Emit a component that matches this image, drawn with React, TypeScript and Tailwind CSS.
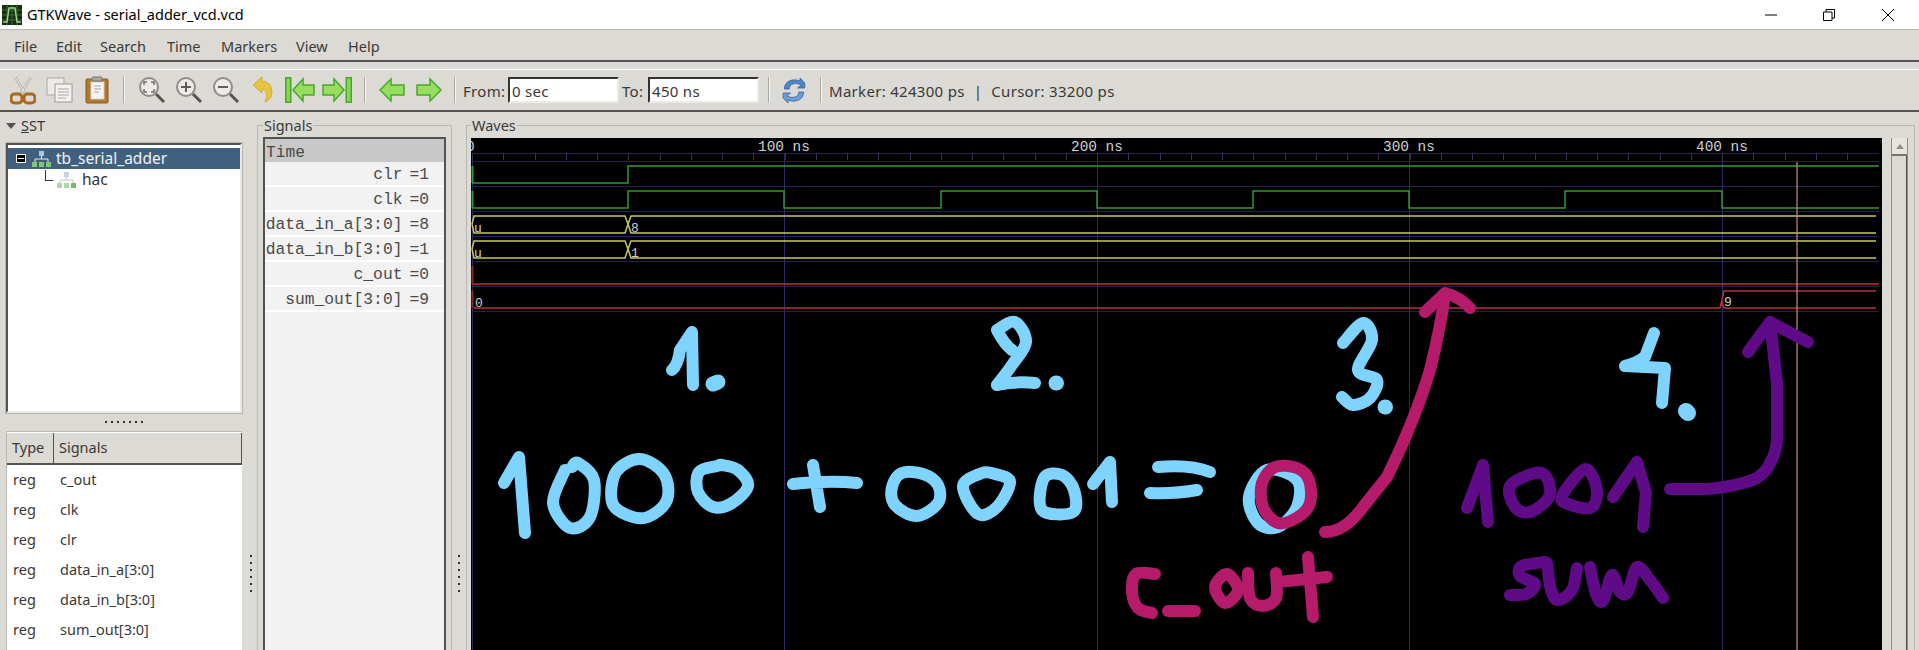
import React, { FC } from "react";

const menuItems = [
  { label: "File", className: "w-[42px]" },
  { label: "Edit", className: "w-[44px]" },
  { label: "Search", className: "w-[67px]" },
  { label: "Time", className: "w-[54px]" },
  { label: "Markers", className: "w-[75px]" },
  { label: "View", className: "w-[52px]" },
  { label: "Help", className: "w-[50px]" },
];

const signalRows = [
  { name: "clr", value: "1" },
  { name: "clk", value: "0" },
  { name: "data_in_a[3:0]", value: "8" },
  { name: "data_in_b[3:0]", value: "1" },
  { name: "c_out", value: "0" },
  { name: "sum_out[3:0]", value: "9" },
];

const typeRows = ["c_out", "clk", "clr", "data_in_a[3:0]", "data_in_b[3:0]", "sum_out[3:0]"];

const majorTicks = [784, 1097, 1409, 1722];
const minorTicks = Array.from({ length: 45 }, (_, i) => 472 + i * 31.25);
const gridRows = [161, 186, 211, 236, 261, 286, 311];

// catmull-rom through the pen points, so the scribbles stay round
const ink = (pts: number[][], closed = false) => {
  const n = pts.length;
  const at = (i: number) => (closed ? pts[(i + n) % n] : pts[Math.max(0, Math.min(n - 1, i))]);
  let d = `M${pts[0][0]} ${pts[0][1]}`;
  const segs = closed ? n : n - 1;
  for (let i = 0; i < segs; i++) {
    const [p0, p1, p2, p3] = [at(i - 1), at(i), at(i + 1), at(i + 2)];
    const c1 = [p1[0] + (p2[0] - p0[0]) / 6, p1[1] + (p2[1] - p0[1]) / 6];
    const c2 = [p2[0] - (p3[0] - p1[0]) / 6, p2[1] - (p3[1] - p1[1]) / 6];
    d += `C${c1[0]} ${c1[1]} ${c2[0]} ${c2[1]} ${p2[0]} ${p2[1]}`;
  }
  return closed ? d + "Z" : d;
};

const blueRound = [
  [[640, 459], [664, 474], [667, 500], [648, 517], [627, 515], [612, 502], [616, 472]],
  [[717, 466], [699, 472], [698, 492], [713, 507], [732, 503], [748, 486], [738, 470], [722, 465]],
  [[902, 473], [892, 487], [895, 505], [917, 516], [938, 503], [938, 485], [923, 474]],
  [[982, 473], [963, 486], [978, 514], [997, 507], [1010, 482], [995, 474]],
  [[1044, 478], [1042, 510], [1073, 512], [1074, 490], [1062, 475]],
  [[1267, 470], [1249, 497], [1258, 523], [1278, 527], [1297, 507], [1297, 480]],
];
const blueOpen = [
  [[565, 470], [553, 503], [570, 528], [590, 517], [594, 480], [578, 463], [572, 467]],
  [[1343, 343], [1363, 323], [1372, 340], [1358, 370], [1377, 380], [1370, 398], [1353, 405], [1342, 397]],
  [[997, 330], [1015, 322], [1026, 342], [1012, 365], [997, 385]],
];

const Separator: FC<{ className: string }> = ({ className }) => (
  <div className={`h-[26px] w-[2px] shrink-0 border-l border-[#a9a69f] bg-white/70 ${className}`} />
);

const AppIcon: FC = () => (
  <svg width="20" height="20" viewBox="0 0 20 20" className="shrink-0">
    <rect width="20" height="20" fill="#12300f" />
    <path d="M0 5H20M0 10H20M0 15H20M5 0V20M10 0V20M15 0V20" stroke="#3f6b35" strokeWidth="1" />
    <path d="M1 17H5L7 3H13L15 17H19" fill="none" stroke="#9fd08c" strokeWidth="1.5" />
  </svg>
);

const ScissorsIcon: FC = () => (
  <svg width="26" height="30" viewBox="0 0 26 30">
    <path d="M5 2L16 20M21 2L10 20" stroke="#b9b7b0" strokeWidth="3" />
    <path d="M5 2L16 20M21 2L10 20" stroke="#e9e8e4" strokeWidth="1" />
    <rect x="1" y="19" width="11" height="9" rx="3.5" fill="none" stroke="#a9691f" strokeWidth="3" />
    <rect x="14" y="19" width="11" height="9" rx="3.5" fill="none" stroke="#a9691f" strokeWidth="3" />
  </svg>
);

const CopyIcon: FC = () => (
  <svg width="28" height="26" viewBox="0 0 28 26">
    <rect x="1" y="1" width="17" height="17" fill="#ecebe7" stroke="#a9a7a1" />
    <rect x="9" y="7" width="17" height="18" fill="#f3f2ef" stroke="#9c9a94" />
    <path d="M12 12H23M12 15H23M12 18H23M12 21H20" stroke="#a9a7a1" />
  </svg>
);

const PasteIcon: FC = () => (
  <svg width="24" height="28" viewBox="0 0 24 28">
    <rect x="1" y="3" width="22" height="24" rx="1" fill="#b0782f" stroke="#8a5a1e" />
    <rect x="6" y="6" width="13" height="17" fill="#f5f4f0" stroke="#d6d3cb" />
    <path d="M9 10H16M9 13H16M9 16H14" stroke="#a9a7a1" />
    <rect x="7" y="1" width="10" height="4" rx="1" fill="#a9a79f" stroke="#77756f" />
  </svg>
);

const ZoomIcon: FC<{ mode: "fit" | "in" | "out" }> = ({ mode }) => (
  <svg width="28" height="28" viewBox="0 0 28 28">
    <circle cx="11" cy="11" r="9" fill="#ecebe7" stroke="#8f8d88" strokeWidth="2" />
    <path d="M18 18L26 26" stroke="#55534f" strokeWidth="3" />
    {mode === "fit" && <path d="M6 9V6H9M13 6H16V9M16 13V16H13M9 16H6V13" fill="none" stroke="#6f6d68" strokeWidth="1.5" />}
    {mode === "in" && <path d="M6 11H16M11 6V16" stroke="#5f5d59" strokeWidth="2" />}
    {mode === "out" && <path d="M6 11H16" stroke="#5f5d59" strokeWidth="2" />}
  </svg>
);

const UndoIcon: FC = () => (
  <svg width="22" height="28" viewBox="0 0 22 28">
    <path d="M1 9L10 1V5Q20 6 20 16Q20 23 13 26Q16 20 14 16Q13 13 10 13V17Z" fill="#e8c43c" stroke="#c9a52a" strokeWidth="0.8" />
  </svg>
);

const GreenArrow: FC<{ dir: "left" | "right"; bar?: boolean }> = ({ dir, bar }) => (
  <svg width="30" height="26" viewBox="0 0 30 26" className={dir === "right" ? "-scale-x-100" : ""}>
    {bar && <rect x="0.75" y="0.75" width="5" height="24.5" fill="#86d650" stroke="#45a828" strokeWidth="1.5" />}
    <path
      d={bar ? "M8 13L18 2V8H29V18H18V24Z" : "M3 13L14 2V8H27V18H14V24Z"}
      fill="#98dc60"
      stroke="#4aa82a"
      strokeWidth="1.5"
    />
  </svg>
);

const RefreshIcon: FC = () => (
  <svg width="24" height="27" viewBox="0 0 20 27" preserveAspectRatio="none">
    <path d="M2 12C2 4 9 1 15 4V1L19 6V11H13L16 8C11 5 6 7 6 12Z" fill="#4f86c6" stroke="#2f5f9c" strokeWidth="0.7" />
    <path d="M18 15C18 23 11 26 5 23V26L1 21V16H7L4 19C9 22 14 20 14 15Z" fill="#6b9fd8" stroke="#2f5f9c" strokeWidth="0.7" />
  </svg>
);

const HierarchyIcon: FC<{ faded?: boolean }> = ({ faded }) => (
  <svg width="20" height="16" viewBox="0 0 20 16" className="shrink-0">
    <rect x="7" y="0" width="5" height="5" fill={faded ? "#c0d4ec" : "#a8c4e8"} />
    <path d="M9.5 5V8M3 11V8H16V11" fill="none" stroke={faded ? "#c9c9c9" : "#e8e8e8"} />
    <rect x="0" y="11" width="5" height="5" fill={faded ? "#a9d8a0" : "#7fc86f"} />
    <rect x="7" y="11" width="5" height="5" fill={faded ? "#a9d8a0" : "#7fc86f"} />
    <rect x="14" y="11" width="5" height="5" fill={faded ? "#78b86c" : "#7fc86f"} />
  </svg>
);

const GripVertical: FC = () => (
  <div className="flex flex-col gap-[5px]">
    {Array.from({ length: 6 }, (_, i) => (
      <div key={i} className="h-[2px] w-[2px] bg-[#33322f]" />
    ))}
  </div>
);

const WavePlot: FC = () => (
  <svg width="1411" height="512" viewBox="471 138 1411 512" className="block bg-black">
    {/* grid */}
    <g stroke="#23234f" strokeWidth="1" shapeRendering="crispEdges">
      <path d="M472 153H1879" />
      {gridRows.map((y) => (
        <path key={y} d={`M472 ${y}H1879`} />
      ))}
      <path d="M472 153V650" stroke="#2b2b66" />
      {majorTicks.map((x) => (
        <path key={x} d={`M${x} 153V650`} stroke="#2b2b66" />
      ))}
    </g>
    <g stroke="#33334f" strokeWidth="1" shapeRendering="crispEdges">
      {minorTicks.map((x) => (
        <path key={x} d={`M${Math.round(x)} 153V160`} />
      ))}
    </g>
    <g fill="#d0d0d0" fontFamily="'Liberation Mono', monospace" fontSize="14.4">
      <text x="466" y="151">0</text>
      <text x="758" y="151">100 ns</text>
      <text x="1071" y="151">200 ns</text>
      <text x="1383" y="151">300 ns</text>
      <text x="1696" y="151">400 ns</text>
    </g>
    {/* traces */}
    <g fill="none" strokeWidth="1.5">
      <path d="M472 183H628V166H1879" stroke="#2f9a3a" />
      <path d="M472 208H628V191H784V208H941V191H1097V208H1253V191H1409V208H1565V191H1722V208H1879" stroke="#2f9a3a" />
      <path d="M472.5 166V183M472.5 191V208" stroke="#2f9a3a" strokeWidth="2" />
      <path d="M472 224L474 216H625L628 224L631 216H1876M472 224L474 233H625L628 224L631 233H1876" stroke="#c9c85a" />
      <path d="M472 249L474 241H625L628 249L631 241H1876M472 249L474 258H625L628 249L631 258H1876" stroke="#c9c85a" />
      <path d="M472 284H1879" stroke="#b8323a" />
      <path d="M472.5 266V284M472.5 291V308" stroke="#8a2a30" strokeWidth="2" />
      <path d="M474 308H1720L1722 303L1724 308H1876M1720 308L1724 291H1876" stroke="#b8323a" />
      <path d="M1797 162V650" stroke="#c98f7f" strokeWidth="1.2" />
    </g>
    <g fill="#d0d0d0" fontFamily="'Liberation Mono', monospace" fontSize="13">
      <text x="474" y="232">u</text>
      <text x="631" y="232">8</text>
      <text x="474" y="257">u</text>
      <text x="631" y="257">1</text>
      <text x="475" y="307">0</text>
      <text x="1724" y="306">9</text>
    </g>
    {/* hand-drawn annotations */}
    <g fill="none" stroke="#7fd4ff" strokeWidth="12" strokeLinecap="round" strokeLinejoin="round" aria-label="1. 2. 3. 4. 1000 + 0001 = 0">
      <path d="M672 370Q678 365 680 350L692 332L693 385" />
      <path d="M713 384L718 382" strokeWidth="15" />
      <path d="M504 483L519 457L525 533" />
      {blueRound.map((pts, i) => (
        <path key={i} d={ink(pts, true)} />
      ))}
      {blueOpen.map((pts, i) => (
        <path key={i} d={ink(pts)} />
      ))}
      <path d="M793 484Q830 480 857 483M813 465L820 507" />
      <path d="M1093 484L1110 462L1112 502" />
      <path d="M1158 467Q1190 464 1210 472M1150 493Q1175 494 1197 490" />
      <path d="M997 385Q1015 381 1035 383M998 332Q1005 345 1012 350" />
      <path d="M1056 383H1056.5" strokeWidth="15" />
      <path d="M1385 407H1385.5" strokeWidth="15" />
      <path d="M1654 333L1645 357Q1635 364 1625 366L1665 368L1662 403" />
      <path d="M1686 411L1688 413" strokeWidth="16" />
    </g>
    <g fill="none" stroke="#b51a6b" strokeWidth="12" strokeLinecap="round" strokeLinejoin="round" aria-label="c_out">
      <path d={ink([[1275, 467], [1297, 468], [1309, 480], [1310, 503], [1298, 517], [1278, 523], [1263, 507], [1262, 483]], true)} />
      <path d="M1325 532Q1345 532 1363 507L1387 477Q1415 420 1430 370Q1440 330 1445 295" />
      <path d="M1425 312L1445 293Q1460 297 1470 308" />
      <path d={ink([[1155, 574], [1136, 574], [1132, 592], [1138, 608], [1152, 613]])} />
      <path d="M1168 611H1195" />
      <path d={ink([[1227, 574], [1215, 587], [1225, 603], [1238, 590]], true)} />
      <path d={ink([[1248, 573], [1250, 598], [1262, 606], [1276, 598], [1276, 573]])} />
      <path d="M1278 582L1327 577M1308 557L1313 617" />
    </g>
    <g fill="none" stroke="#5f0a87" strokeWidth="12" strokeLinecap="round" strokeLinejoin="round" aria-label="1001 sum">
      <path d="M1467 508L1483 465L1488 522" />
      <path d={ink([[1535, 473], [1510, 486], [1515, 507], [1530, 512], [1549, 497], [1547, 478]], true)} />
      <path d={ink([[1583, 470], [1562, 496], [1568, 504], [1590, 508], [1597, 495], [1593, 477]], true)} />
      <path d="M1613 497L1637 462L1646 493L1643 527" />
      <path d="M1670 489H1707Q1740 486 1757 478Q1768 470 1770 463Q1778 450 1777 433V383L1770 322" />
      <path d="M1748 352L1770 322L1808 342" />
      <path d={ink([[1545, 562], [1522, 566], [1520, 576], [1535, 584], [1526, 594], [1510, 595]])} />
      <path d={ink([[1547, 563], [1551, 590], [1558, 600], [1572, 590], [1577, 568]])} />
      <path d={ink([[1590, 567], [1596, 594], [1603, 601], [1612, 575], [1620, 592], [1628, 592], [1637, 567], [1650, 580], [1663, 598]])} />
    </g>
  </svg>
);

const inputClass =
  "h-[26px] w-[111px] border-2 border-t-[#33322f] border-r-[#eceae5] border-b-[#eceae5] border-l-[#33322f] bg-white pl-[2px] pt-[2px] outline-none";

const App: FC = () => {
  return (
    <div className="flex h-[650px] w-[1919px] flex-col overflow-hidden bg-[#dcdad5] font-['Noto_Sans',sans-serif] text-[#3a3936]">
      {/* title bar */}
      <div className="flex h-[29px] shrink-0 items-center bg-white pl-[2px] text-black">
        <AppIcon />
        <span className="ml-[5px] text-[14.5px]">GTKWave - serial_adder_vcd.vcd</span>
        <div className="ml-auto flex h-full items-center">
          <svg width="12" height="2" viewBox="0 0 12 2" className="mr-[46px]">
            <path d="M0 1H12" stroke="#000" />
          </svg>
          <svg width="12" height="12" viewBox="0 0 12 12" className="mr-[47px]">
            <path d="M0.5 3H9V11.5H0.5ZM3 3V0.5H11.5V9H9" fill="none" stroke="#000" />
          </svg>
          <svg width="12" height="12" viewBox="0 0 12 12" className="mr-[25px]">
            <path d="M0 0L12 12M12 0L0 12" stroke="#000" />
          </svg>
        </div>
      </div>

      {/* menu */}
      <div className="flex h-[33px] shrink-0 items-center border-t border-b-2 border-t-[#b9b7b1] border-b-[#55534f] pt-[3px] pl-[14px] text-[14.5px]">
        {menuItems.map((item) => (
          <span key={item.label} className={item.className}>
            {item.label}
          </span>
        ))}
      </div>

      {/* toolbar */}
      <div className="mt-[7px] flex h-[43px] shrink-0 items-center border-t border-b-2 border-t-white border-b-[#55534f] pl-[4px] text-[15px] tracking-[0.3px]">
        <div className="flex w-[37px] justify-center"><ScissorsIcon /></div>
        <div className="flex w-[37px] justify-center"><CopyIcon /></div>
        <div className="flex w-[37px] justify-center"><PasteIcon /></div>
        <Separator className="mx-[8px]" />
        <div className="flex w-[37px] justify-center"><ZoomIcon mode="fit" /></div>
        <div className="flex w-[37px] justify-center"><ZoomIcon mode="in" /></div>
        <div className="flex w-[37px] justify-center"><ZoomIcon mode="out" /></div>
        <div className="flex w-[37px] justify-center"><UndoIcon /></div>
        <div className="flex w-[37px] justify-center"><GreenArrow dir="left" bar /></div>
        <div className="flex w-[37px] justify-center"><GreenArrow dir="right" bar /></div>
        <Separator className="ml-[9px] mr-[7px]" />
        <div className="flex w-[37px] justify-center"><GreenArrow dir="left" /></div>
        <div className="flex w-[37px] justify-center"><GreenArrow dir="right" /></div>
        <Separator className="ml-[7px] mr-[7px]" />
        <span className="w-[45px] pt-[2px]">From:</span>
        <input readOnly value="0 sec" className={inputClass} />
        <span className="ml-[3px] w-[26px] pt-[2px]">To:</span>
        <input readOnly value="450 ns" className={inputClass} />
        <Separator className="ml-[9px] mr-[12px]" />
        <RefreshIcon />
        <Separator className="ml-[14px] mr-[7px]" />
        <span className="pt-[2px]">Marker: 424300 ps</span>
        <span className="mx-[9px] pt-[2px]">|</span>
        <span className="pt-[2px]">Cursor: 33200 ps</span>
      </div>

      {/* panes */}
      <div className="flex min-h-0 flex-1">
        {/* SST */}
        <div className="flex w-[248px] shrink-0 flex-col pl-[6px] pr-[6px]">
          <div className="flex h-[31px] shrink-0 items-center pb-[4px] text-[14.5px]">
            <div className="h-0 w-0 border-x-[5px] border-t-[6px] border-x-transparent border-t-[#55534f]" />
            <span className="ml-[5px]"><span className="underline">S</span>ST</span>
          </div>
          <div className="h-[270px] shrink-0 border-2 border-t-[#55534f] border-r-[#eceae5] border-b-[#eceae5] border-l-[#55534f] bg-white pt-[3px] text-[15.5px] outline outline-1 outline-[#b9b7b1]">
            <div className="flex h-[21px] items-center bg-[#41607e] pl-[8px] text-[#eef2f6]">
              <div className="flex h-[9px] w-[10px] items-center justify-center border border-white bg-black">
                <div className="h-[1px] w-[6px] bg-white" />
              </div>
              <div className="ml-[6px]"><HierarchyIcon /></div>
              <span className="ml-[4px]">tb_serial_adder</span>
            </div>
            <div className="flex h-[22px] items-center pl-[37px]">
              <div className="mb-[10px] h-[11px] w-[8px] border-b border-l border-[#33322f]" />
              <div className="ml-[4px]"><HierarchyIcon faded /></div>
              <span className="ml-[5px] text-[#33322f]">hac</span>
            </div>
          </div>
          <div className="flex h-[18px] shrink-0 items-center justify-center gap-[4px]">
            {Array.from({ length: 7 }, (_, i) => (
              <div key={i} className="h-[2px] w-[2px] bg-[#33322f]" />
            ))}
          </div>
          <div className="flex-1 border-t border-l border-[#b9b7b1] bg-white text-[14.5px]">
            <div className="flex h-[33px] border-t border-b-2 border-t-white border-b-[#55534f] bg-[#dcdad5]">
              <div className="flex w-[47px] items-center border-r border-[#55534f] pl-[5px]">Type</div>
              <div className="flex flex-1 items-center border-r border-[#55534f] pl-[5px]">Signals</div>
            </div>
            {typeRows.map((name) => (
              <div key={name} className="flex h-[30px] items-center">
                <span className="w-[53px] pl-[6px]">reg</span>
                <span>{name}</span>
              </div>
            ))}
          </div>
        </div>

        {/* gutter */}
        <div className="flex w-[9px] shrink-0 items-center justify-center pt-[384px] pr-[3px]"><GripVertical /></div>

        {/* Signals */}
        <div className="relative mt-[13px] w-[195px] shrink-0 border-t border-r border-l border-[#b9b7b1] px-[5px] pt-[11px]">
          <span className="absolute top-[-11px] left-[5px] bg-[#dcdad5] px-[1px] text-[14.5px] leading-[20px]">Signals</span>
          <div className="h-full border-2 border-b-0 border-[#55534f] bg-[#f2f2f2] font-['Liberation_Mono',monospace] text-[16.3px] text-[#4a4a4a]">
            <div className="flex h-[23px] items-center bg-[#c8c8c8] pt-[5px] pl-[1px]">Time</div>
            {signalRows.map((row) => (
              <div key={row.name} className="flex h-[25px] items-center justify-end border-b-2 border-white pt-[3px] pr-[15px]">
                <span>{row.name}</span>
                <span className="ml-[7px]">={row.value}</span>
              </div>
            ))}
          </div>
        </div>

        {/* gutter */}
        <div className="flex w-[14px] shrink-0 items-center justify-center pt-[384px]"><GripVertical /></div>

        {/* Waves */}
        <div className="relative mt-[13px] mr-[4px] flex min-w-0 flex-1 border-t border-r border-l border-[#b9b7b1] pt-[12px] pr-[4px] pl-[4px]">
          <span className="absolute top-[-11px] left-[4px] bg-[#dcdad5] px-[1px] text-[14.5px] leading-[20px]">Waves</span>
          <WavePlot />
          <div className="ml-[9px] flex w-[17px] shrink-0 flex-col border-x border-[#8f8d88] bg-[#dcdad5]">
            <div className="flex h-[18px] items-center justify-center border-b-2 border-[#77756f] bg-[#e6e4df]">
              <div className="h-0 w-0 border-x-[4px] border-b-[5px] border-x-transparent border-b-[#8f8d88]" />
            </div>
            <div className="flex-1 border-r border-[#55534f]" />
          </div>
        </div>
      </div>
    </div>
  );
};

export default App;
